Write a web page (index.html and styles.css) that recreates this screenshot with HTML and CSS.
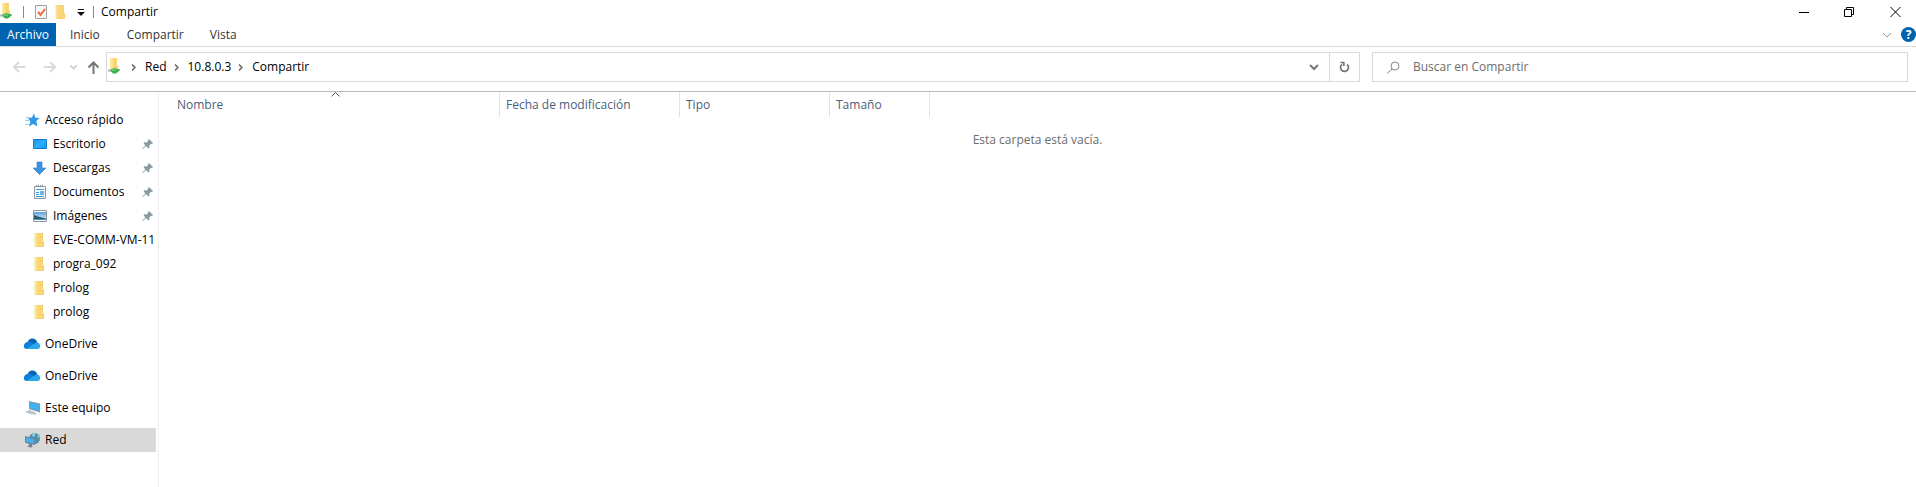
FILE: index.html
```html
<!DOCTYPE html>
<html lang="es">
<head>
<meta charset="utf-8">
<title>Compartir</title>
<link rel="stylesheet" href="styles.css">
</head>
<body>
<svg class="defs" aria-hidden="true">
  <defs>
    <linearGradient id="fold" x1="0" x2="1" y1="0" y2="0"><stop offset="0" stop-color="#ffe9a6"/><stop offset="1" stop-color="#f8d36e"/></linearGradient>
    <linearGradient id="screen" x1="0" x2="1" y1="0" y2="1"><stop offset="0" stop-color="#1a8fe8"/><stop offset=".5" stop-color="#2cb0ff"/><stop offset="1" stop-color="#1492ef"/></linearGradient>
    <linearGradient id="sky" x1="0" x2="0" y1="0" y2="1"><stop offset="0" stop-color="#5c9fe0"/><stop offset="1" stop-color="#e4f2fb"/></linearGradient>
    <symbol id="folder" viewBox="0 0 16 16"><path fill="#f7cf6b" d="M3 1h8v8h1v6H3z"/><path fill="url(#fold)" d="M2 1h3l2 1v11l-2 2-3-1z"/><path fill="#f9d778" d="M7 2h3v8h1v4H7z"/><path fill="#fff2c6" d="M2 1h1v13H2z"/></symbol>
    <symbol id="netfolder" viewBox="0 0 16 18"><path fill="#f7d373" d="M2 1h7v8h1v4H2z"/><path fill="url(#fold)" d="M2 1h3l2 1v11H2z"/><path fill="#a9b6b2" d="M0 12.500h4v2H0zM9 12h3v2H9z"/><path fill="#3bb04c" d="M3 12.500l3-1.500 5 1.500v1.500l-3 2.500H5L2.500 14z"/><path fill="#85dc89" d="M4 12.500h4v1H4z"/></symbol>
    <symbol id="pin" viewBox="0 0 12 12"><path fill="#8b99a3" d="M7 1l4 4-1 1-1-.3L7.200 7.500l.2 2-1 1-2.400-2.400L1 11l-.6.100.1-.6L3.400 7.500 1.500 5.300l1-1 2 .2L6.300 3 6 2z"/></symbol>
    <symbol id="cloud" viewBox="0 0 18 14"><path fill="#0a64b8" d="M4.500 6C5 2.800 7 1.500 9.300 1.500c2.500 0 4.400 1.500 5 3.800L10 9z"/><path fill="#0f7fd8" d="M5 4.700c1.500-.2 3 .3 4.300 1.300L13 8.500 3 12C1.500 11.600.8 10.400.8 9c0-2.300 1.800-4 4.200-4.300z"/><path fill="#28a8ea" d="M3 12l8.500-5.500c2.500-2 5.600-.6 5.700 2.500 0 1.800-1.200 3-2.700 3H4z"/></symbol>
  </defs>
</svg>

<header class="titlebar">
  <svg class="app-icon" width="16" height="18"><use href="#netfolder"/></svg>
  <span class="rule"></span>
  <button class="quick" aria-label="Propiedades"><svg width="13" height="14" viewBox="0 0 13 14"><path fill="#f7f8f9" stroke="#9ca1a5" d="M.5.5h11v13H.5z"/><path fill="none" stroke="#ee6b38" stroke-width="2" d="M3 7l2.500 3L10 4"/></svg></button>
  <button class="quick" aria-label="Nueva carpeta"><svg width="16" height="16"><use href="#folder"/></svg></button>
  <button class="quick" aria-label="Personalizar barra"><svg width="8" height="8" viewBox="0 0 8 8"><path fill="#111" d="M1 1h6v1H1zM0 4h8L4 8z"/></svg></button>
  <span class="rule"></span>
  <h1 class="title">Compartir</h1>
  <div class="window-controls">
    <button aria-label="Minimizar"><svg width="10" height="10"><path stroke="#000" d="M0 5.500h10"/></svg></button>
    <button aria-label="Restaurar"><svg width="10" height="10"><path fill="none" stroke="#000" d="M.5 2.500h7v7h-7zM2.500 2V.5h7v7H8"/></svg></button>
    <button aria-label="Cerrar"><svg width="11" height="10"><path stroke="#000" d="M.5 0l10 10M10.500 0L.5 10"/></svg></button>
  </div>
</header>

<nav class="ribbon">
  <button class="tab tab-file">Archivo</button>
  <button class="tab">Inicio</button>
  <button class="tab">Compartir</button>
  <button class="tab">Vista</button>
  <div class="ribbon-end">
    <button aria-label="Expandir la cinta"><svg width="8" height="6"><path fill="none" stroke="#999" d="M0 1l4 4 4-4"/></svg></button>
    <button class="help" aria-label="Ayuda">?</button>
  </div>
</nav>

<div class="navbar">
  <div class="history">
    <button aria-label="Atrás"><svg width="13" height="12" viewBox="0 0 13 12"><path fill="none" stroke="#dadada" stroke-width="2" d="M12.500 6H1M6 1L1 6l5 5"/></svg></button>
    <button aria-label="Adelante"><svg width="13" height="12" viewBox="0 0 13 12"><path fill="none" stroke="#dadada" stroke-width="2" d="M.5 6H12M7 1l5 5-5 5"/></svg></button>
    <button class="recent" aria-label="Ubicaciones recientes"><svg width="7" height="5"><path fill="none" stroke="#d4d4d4" stroke-width="2" d="M0 0l3.500 3.500L7 0"/></svg></button>
    <button aria-label="Subir"><svg width="13" height="13" viewBox="0 0 13 13"><path fill="none" stroke="#777" stroke-width="2" d="M6.500 13V2M1.500 6.500l5-5 5 5"/></svg></button>
  </div>
  <div class="address">
    <svg class="address-icon" width="16" height="18"><use href="#netfolder"/></svg>
    <svg class="sep" width="5" height="7"><path fill="none" stroke="#666" stroke-width="1.500" d="M1 .5l3 3-3 3"/></svg>
    <a href="#">Red</a>
    <svg class="sep" width="5" height="7"><path fill="none" stroke="#666" stroke-width="1.500" d="M1 .5l3 3-3 3"/></svg>
    <a href="#">10.8.0.3</a>
    <svg class="sep" width="5" height="7"><path fill="none" stroke="#666" stroke-width="1.500" d="M1 .5l3 3-3 3"/></svg>
    <a href="#">Compartir</a>
    <button class="drop" aria-label="Direcciones anteriores"><svg width="10" height="7"><path fill="none" stroke="#777" stroke-width="2" d="M1 1l4 4 4-4"/></svg></button>
    <button class="refresh" aria-label="Actualizar"><svg width="11" height="12" viewBox="0 0 11 12"><path fill="none" stroke="#777" stroke-width="1.700" d="M8 3.300A4 4 0 1 1 3 3.300M1.500 1.500h3.300V5"/></svg></button>
  </div>
  <label class="search">
    <svg width="13" height="13" viewBox="0 0 13 13"><circle cx="8" cy="5" r="4" fill="none" stroke="#888"/><path stroke="#888" d="M5 8l-5 4.500"/></svg>
    <input type="search" aria-label="Buscar" placeholder="Buscar en Compartir">
  </label>
</div>

<div class="content">
  <aside class="sidebar">
    <a class="item" href="#"><svg width="16" height="16" viewBox="0 0 16 16"><path fill="#2f9be8" d="M9 1l1 4.500 4.500.500-3.200 3 1.200 5.500-4.200-2.500L4 14.500l1.300-5L3 6l4-.5z"/><path stroke="#9bd0f5" d="M1 5.500h4M0 8.500h4M0 12.500h4"/></svg>Acceso rápido</a>
    <a class="item child" href="#"><svg width="16" height="16" viewBox="0 0 16 16"><path fill="url(#screen)" stroke="#127bc9" d="M1.500 3.500h13v9h-13z"/></svg>Escritorio<svg class="pin" width="12" height="12"><use href="#pin"/></svg></a>
    <a class="item child" href="#"><svg width="16" height="16" viewBox="0 0 16 16"><path fill="#3b93e1" stroke="#2f7dc9" stroke-width=".6" d="M5 2h5v6h4l-6.500 6.500L1 8h4z"/></svg>Descargas<svg class="pin" width="12" height="12"><use href="#pin"/></svg></a>
    <a class="item child" href="#"><svg width="16" height="16" viewBox="0 0 16 16"><path fill="#f4f8fa" stroke="#8d969c" d="M2.500 2.500h11v12h-11z"/><path stroke="#8b9499" d="M4.500 1v2M6.500 1v2M8.500 1v2M10.500 1v2"/><path stroke="#3f9fd8" d="M4 5.500h8M4 8.500h3M4 10.500h3M4 12.500h8"/><path fill="#68b6e3" d="M8 7h4v4H8z"/></svg>Documentos<svg class="pin" width="12" height="12"><use href="#pin"/></svg></a>
    <a class="item child" href="#"><svg width="16" height="16" viewBox="0 0 16 16"><path fill="#fff" stroke="#8e989f" d="M1.500 2.500h13v11h-13z"/><path fill="url(#sky)" d="M2 4h12v8H2z"/><path fill="#2c5d69" d="M2 7l4 1.500 8 2v1H2z"/><path fill="#4c93bd" d="M2 11h12v1H2z"/></svg>Imágenes<svg class="pin" width="12" height="12"><use href="#pin"/></svg></a>
    <a class="item child" href="#"><svg width="16" height="16"><use href="#folder"/></svg>EVE-COMM-VM-11</a>
    <a class="item child" href="#"><svg width="16" height="16"><use href="#folder"/></svg>progra_092</a>
    <a class="item child" href="#"><svg width="16" height="16"><use href="#folder"/></svg>Prolog</a>
    <a class="item child" href="#"><svg width="16" height="16"><use href="#folder"/></svg>prolog</a>
    <a class="item group" href="#"><svg class="wide" width="18" height="14"><use href="#cloud"/></svg>OneDrive</a>
    <a class="item group" href="#"><svg class="wide" width="18" height="14"><use href="#cloud"/></svg>OneDrive</a>
    <a class="item group" href="#"><svg width="16" height="16" viewBox="0 0 16 16"><path fill="#8796a0" d="M4 1l11 2.500v9L4 9z"/><path fill="#3eb1f5" d="M5 2.200l9 2.300v6.600L5 8.300z"/><path fill="#b9c2c9" d="M4 10l7 2.500-4 2L0 12zM10 13l2 .7-2 1.300-2-.7z"/></svg>Este equipo</a>
    <a class="item group selected" href="#"><svg width="16" height="16" viewBox="0 0 16 16"><circle cx="9.500" cy="6.500" r="5.500" fill="#4a93b0"/><path fill="#9fd2dc" d="M7 2l3-1v3L8 5zM12 3l2 1v3z"/><path fill="#71818d" d="M0 4l10 2.500V13l-3-.5V14l1 .8-2 .7-4-1 2-1V12L0 10.500z"/><path fill="#42b1ef" d="M1 5.200l8 2.200v4.500L1 9.700z"/></svg>Red</a>
  </aside>
  <main class="files">
    <table class="list">
      <colgroup><col class="c-name"><col class="c-date"><col class="c-type"><col class="c-size"><col></colgroup>
      <thead>
        <tr>
          <th scope="col">Nombre<svg class="sort" width="9" height="5"><path fill="none" stroke="#555" d="M.5 4.500l4-4 4 4"/></svg></th>
          <th scope="col">Fecha de modificación</th>
          <th scope="col">Tipo</th>
          <th scope="col">Tamaño</th>
          <td></td>
        </tr>
      </thead>
      <tbody><tr><td class="empty" colspan="5">Esta carpeta está vacía.</td></tr></tbody>
    </table>
  </main>
</div>
</body>
</html>
```
FILE: styles.css
```css
* { box-sizing: border-box; }
body {
  margin: 0;
  min-height: 100vh;
  display: flex;
  flex-direction: column;
  background: #fff;
  color: #000;
  font: 12px/16px "Open Sans", "Noto Sans", sans-serif;
}
svg { display: block; flex: none; }
.defs { position: absolute; width: 0; height: 0; }
button {
  display: flex;
  align-items: center;
  justify-content: center;
  padding: 0;
  border: 0;
  background: none;
  color: inherit;
  font: inherit;
}
a { color: inherit; text-decoration: none; }

.titlebar { display: flex; align-items: center; height: 23px; }
.rule { width: 1px; height: 12px; margin: 0 7px; background: #8a8a8a; }
.titlebar .quick { width: 20px; height: 22px; }
.quick + .rule { margin-left: 2px; }
.app-icon { margin-bottom: 2px; }
.title { margin: 0; font-size: 12px; font-weight: 400; }
.window-controls { display: flex; margin-left: auto; }
.window-controls button { width: 45px; height: 20px; }
.window-controls button:last-child { width: 46px; padding-left: 2px; }
.window-controls { margin-right: -1px; }

.ribbon { display: flex; align-items: stretch; height: 24px; border-bottom: 1px solid #dadbdc; }
.tab { padding: 0 13px; color: #333; }
.tab-file { width: 56px; padding: 0; background: #0063b1; color: #fff; }
.tab-file + .tab { padding: 0 14px; }
.ribbon-end { display: flex; align-items: center; gap: 10px; margin-left: auto; }
.help { width: 15px; height: 15px; border-radius: 50%; background: #0063b1; color: #fff; font-weight: 700; }

.navbar { display: flex; align-items: center; height: 45px; padding: 0 8px 4px 12px; border-bottom: 1px solid #b9b9b9; }
.history { display: flex; align-items: center; width: 94px; }
.history button { width: 14px; height: 24px; margin-right: 16px; }
.history button:nth-child(2) { margin-right: 10px; }
.history .recent { margin-right: 6px; }
.history button:last-child { margin-right: 0; }
.address { display: flex; align-items: center; flex: 1; height: 30px; border: 1px solid #d9d9d9; }
.address-icon { margin: 0 0 2px 1px; }
.sep { margin: 0 9px 0 7px; }
.drop { width: 30px; height: 28px; margin-left: auto; }
.refresh { width: 30px; height: 28px; border-left: 1px solid #d9d9d9; }
.search { display: flex; align-items: center; gap: 13px; flex: 0 1 536px; height: 30px; margin-left: 12px; padding-left: 14px; border: 1px solid #d9d9d9; }
.search input { flex: 1; min-width: 0; padding: 0; border: 0; outline: 0; background: none; font: inherit; }
.search input::placeholder { color: #6d6d6d; opacity: 1; }

.content { display: flex; flex: 1; }
.sidebar { width: 159px; padding: 16px 2px 0 0; border-right: 1px solid #f2f2f2; }
.item { display: flex; align-items: center; gap: 4px; height: 24px; padding-left: 25px; white-space: nowrap; }
.child { gap: 5px; padding-left: 32px; }
.group { margin-top: 8px; }
.item .wide { margin-left: -2px; }
.selected { background: #d9d9d9; }
.pin { margin-left: auto; margin-right: 2px; }

.files { flex: 1; }
.list { width: 100%; border-collapse: separate; border-spacing: 0; table-layout: fixed; }
.c-name { width: 341px; }
.c-date { width: 180px; }
.c-type { width: 150px; }
.c-size { width: 100px; }
.list th {
  position: relative;
  height: 25px;
  padding: 0 0 0 6px;
  border-right: 1px solid #e2e2e2;
  color: #4c607a;
  font-weight: 400;
  text-align: left;
}
.list th:first-child { padding-left: 18px; }
.sort { position: absolute; top: 0; left: 172px; }
.list .empty { padding: 15px 0; color: #6d6d6d; text-align: center; }
```
